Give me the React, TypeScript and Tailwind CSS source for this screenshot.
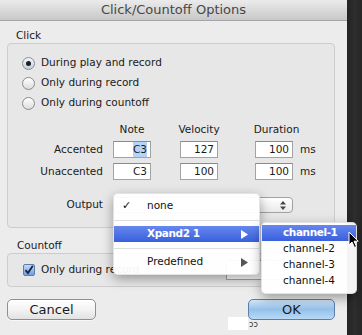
import { ReactNode } from 'react';

const font = "font-['DejaVu_Sans',sans-serif]";

function Radio({ checked, label }: { checked?: boolean; label: string }) {
  return (
    <div className="flex h-[14px] items-center gap-[6px]">
      <div
        className={`flex h-[13px] w-[13px] items-center justify-center rounded-full border border-[#8c8c8c] ${
          checked
            ? 'bg-gradient-to-b from-[#f2f6fb] to-[#c3d0e2]'
            : 'bg-gradient-to-b from-[#ffffff] to-[#dcdcdc]'
        }`}
      >
        {checked && <div className="h-[5px] w-[5px] rounded-full bg-[#1e1e1e]" />}
      </div>
      <span>{label}</span>
    </div>
  );
}

function Field({ value, selected }: { value: string; selected?: boolean }) {
  return (
    <div className="flex h-[17px] w-[38px] items-center justify-end border border-[#a3a3a3] border-t-[#8a8a8a] bg-white pr-[3px]">
      <span className={selected ? 'bg-[#b4d3fb]' : ''}>{value}</span>
    </div>
  );
}

function ValueRow({ label, note, velocity, duration, selected }: {
  label: string;
  note: string;
  velocity: string;
  duration: string;
  selected?: boolean;
}) {
  return (
    <div className="flex h-[17px] items-center">
      <span className="w-[95px] text-right">{label}</span>
      <div className="ml-[10px]">
        <Field value={note} selected={selected} />
      </div>
      <div className="ml-[29px]">
        <Field value={velocity} />
      </div>
      <div className="ml-[37px]">
        <Field value={duration} />
      </div>
      <span className="ml-[7px]">ms</span>
    </div>
  );
}

function Arrow({ color }: { color: string }) {
  return (
    <svg width="7" height="9" viewBox="0 0 7 9" className="absolute right-[11px]">
      <polygon points="0,0 7,4.5 0,9" fill={color} />
    </svg>
  );
}

function MenuItem({ children, active, bold }: { children: ReactNode; active?: boolean; bold?: boolean }) {
  return (
    <div
      className={`relative flex h-[16px] items-center ${
        active ? 'bg-gradient-to-b from-[#6787ef] to-[#3a5fdc] text-white' : 'text-[#111]'
      } ${bold ? 'font-bold tracking-[-0.4px]' : ''}`}
    >
      {children}
    </div>
  );
}

function Separator() {
  return (
    <div className="flex h-[12px] items-center">
      <div className="h-px w-full bg-[#dedede]" />
    </div>
  );
}

export default function App() {
  return (
    <div className={`relative flex h-[335px] w-[362px] overflow-hidden bg-[#2b2b2b] text-[10.5px] text-[#1a1a1a] ${font}`}>
      <div className="flex h-full w-[347px] flex-col bg-[#ececec]">
        <div className="flex h-[21px] items-center justify-center border-b border-[#a5a5a5] bg-gradient-to-b from-[#ebebeb] to-[#c8c8c8] text-[13px] text-[#474747]">
          Click/Countoff Options
        </div>

        <div className="mt-[7px] h-[14px] pl-[16px] leading-[14px]">Click</div>

        <div className="ml-[7px] mt-[1px] w-[328px] rounded-[4px] border border-[#cdcdcd] bg-[#e7e7e7] pb-[14px] pt-[12px]">
          <div className="flex flex-col gap-[6px] pl-[14px]">
            <Radio checked label="During play and record" />
            <Radio label="Only during record" />
            <Radio label="Only during countoff" />
          </div>

          <div className="mt-[13px] flex h-[14px] items-center">
            <span className="w-[95px]" />
            <div className="ml-[10px] flex w-[38px] justify-center whitespace-nowrap">Note</div>
            <div className="ml-[29px] flex w-[38px] justify-center whitespace-nowrap">Velocity</div>
            <div className="ml-[37px] flex w-[38px] justify-center whitespace-nowrap pl-[5px]">Duration</div>
          </div>
          <div className="mt-[4px]">
            <ValueRow label="Accented" note="C3" velocity="127" duration="100" selected />
          </div>
          <div className="mt-[5px]">
            <ValueRow label="Unaccented" note="C3" velocity="100" duration="100" />
          </div>

          <div className="mt-[17px] flex h-[16px] items-center">
            <span className="w-[95px] text-right">Output</span>
            <div className="relative ml-[10px] flex h-[16px] w-[180px] items-center justify-end rounded-[4px] border border-[#a2a2a2] bg-gradient-to-b from-white to-[#e9e9e9] pr-[6px]">
              <svg width="6" height="9" viewBox="0 0 6 9">
                <polygon points="3,0 6,3.5 0,3.5" fill="#444" />
                <polygon points="0,5.5 6,5.5 3,9" fill="#444" />
              </svg>
            </div>
          </div>
        </div>

        <div className="mt-[10px] h-[14px] pl-[17px] leading-[14px]">Countoff</div>

        <div className="ml-[7px] mt-[1px] flex h-[34px] w-[328px] items-center rounded-[4px] border border-[#cdcdcd] bg-[#e7e7e7] pl-[15px]">
          <div className="flex h-[12px] w-[12px] items-center justify-center rounded-[2px] border border-[#5d7ea8] bg-gradient-to-b from-[#c3dbf6] to-[#6d9ee0]">
            <svg width="10" height="10" viewBox="0 0 10 10">
              <path d="M1.5 5.2 L4 8 L8.8 0.8" stroke="#14233f" strokeWidth="1.8" fill="none" />
            </svg>
          </div>
          <span className="ml-[6px] w-[185px] whitespace-nowrap">Only during record</span>
          <div className="h-[20px] w-[70px] border border-[#a3a3a3] bg-white" />
        </div>

        <div className="ml-[7px] mt-[12px] flex w-[328px] justify-between">
          <div className="flex h-[21px] w-[89px] items-center justify-center rounded-[5px] border border-[#8f8f8f] bg-gradient-to-b from-[#ffffff] via-[#f3f3f3] to-[#e2e2e2] text-[13px] shadow-[0_1px_0_rgba(255,255,255,0.6)]">
            Cancel
          </div>
          <div className="flex h-[21px] w-[87px] items-center justify-center rounded-[5px] border border-[#5b7ea6] bg-gradient-to-b from-[#d3e6f8] via-[#93c2ec] to-[#b9daf6] text-[13px]">
            OK
          </div>
        </div>
      </div>

      <div className="h-full flex-1 bg-gradient-to-r from-[#232323] via-[#2e2e2e] to-[#262626]" />

      {/* popup menu */}
      <div className="absolute left-[113px] top-[193px] w-[147px] rounded-[5px] border border-black/10 bg-white/95 py-[4px] shadow-[0_4px_12px_rgba(0,0,0,0.35)]">
        <MenuItem>
          <span className="absolute left-[8px] text-[11px]">✓</span>
          <span className="pl-[33px]">none</span>
        </MenuItem>
        <Separator />
        <MenuItem active bold>
          <span className="pl-[33px]">Xpand2 1</span>
          <Arrow color="#ffffff" />
        </MenuItem>
        <Separator />
        <MenuItem>
          <span className="pl-[33px]">Predefined</span>
          <Arrow color="#555555" />
        </MenuItem>
      </div>

      {/* submenu */}
      <div className="absolute left-[261px] top-[222px] w-[96px] rounded-[5px] border border-black/10 bg-white/95 pb-[4px] pt-[2px] shadow-[0_4px_12px_rgba(0,0,0,0.35)]">
        <MenuItem active bold>
          <span className="pl-[21px]">channel-1</span>
        </MenuItem>
        <MenuItem>
          <span className="pl-[21px]">channel-2</span>
        </MenuItem>
        <MenuItem>
          <span className="pl-[21px]">channel-3</span>
        </MenuItem>
        <MenuItem>
          <span className="pl-[21px]">channel-4</span>
        </MenuItem>
      </div>

      {/* cursor */}
      <svg width="12" height="18" viewBox="0 0 12 18" className="absolute left-[348px] top-[231px]">
        <path d="M1 1 L1 14 L4 11 L6.5 16.5 L8.5 15.5 L6 10.2 L10.2 10.2 Z" fill="#000" stroke="#fff" strokeWidth="1" />
      </svg>

      {/* stray artifacts at the bottom */}
      <div className="absolute left-[228px] top-[317px] h-[13px] w-[20px] bg-white" />
      <span className="absolute left-[249px] top-[320px] text-[8px] leading-[10px] text-[#333]">ɔɔ</span>
    </div>
  );
}
